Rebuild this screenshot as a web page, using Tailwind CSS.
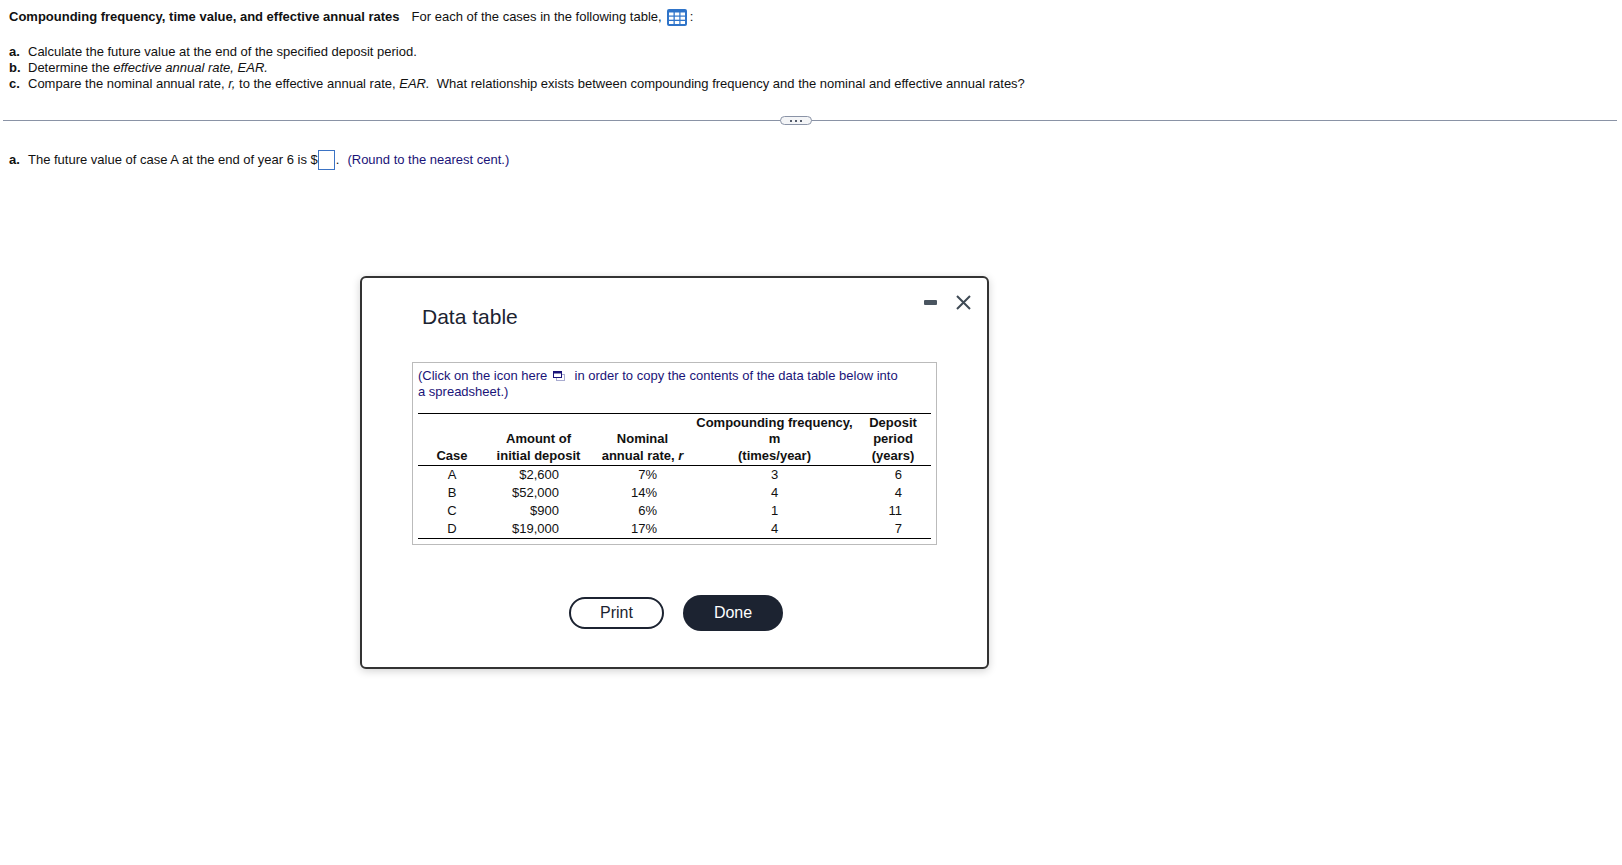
<!DOCTYPE html>
<html lang="en">
<head>
  <meta charset="UTF-8">
  <meta name="viewport" content="width=device-width, initial-scale=1.0">
  <title>Data table</title>
  <script src="https://cdn.jsdelivr.net/npm/@tailwindcss/browser@4"></script>
</head>
<body class="relative bg-white text-[#111] min-h-[865px] font-['Liberation_Sans',Arial,sans-serif] text-[13px] leading-[16px]">
  <!-- question -->
  <div class="pl-[9px] pt-[9px]">
    <div class="flex items-center h-[16px]">
      <b>Compounding frequency, time value, and effective annual rates</b>
      <span class="ml-[12px]">For each of the cases in the following table,</span>
      <svg class="ml-[5px] w-[20px] h-[17px]" viewBox="0 0 20 17">
        <rect x="0" y="0" width="20" height="17" rx="2" fill="#2f74c9"/>
        <g fill="#fff">
          <rect x="2" y="3.5" width="4.5" height="3"/><rect x="7.8" y="3.5" width="4.5" height="3"/><rect x="13.5" y="3.5" width="4.5" height="3"/>
          <rect x="2" y="7.7" width="4.5" height="3"/><rect x="7.8" y="7.7" width="4.5" height="3"/><rect x="13.5" y="7.7" width="4.5" height="3"/>
          <rect x="2" y="12" width="4.5" height="3"/><rect x="7.8" y="12" width="4.5" height="3"/><rect x="13.5" y="12" width="4.5" height="3"/>
        </g>
      </svg>
      <span class="ml-[3px]">:</span>
    </div>
    <div class="mt-[19px]"><b class="inline-block w-[19px]">a.</b>Calculate the future value at the end of the specified deposit period.</div>
    <div><b class="inline-block w-[19px]">b.</b>Determine the <i>effective annual rate, EAR.</i></div>
    <div><b class="inline-block w-[19px]">c.</b>Compare the nominal annual rate, <i>r,</i> to the effective annual rate, <i>EAR.</i>&nbsp; What relationship exists between compounding frequency and the nominal and effective annual rates?</div>
  </div>

  <!-- divider -->
  <div class="relative mx-[3px] mt-[28px] h-px bg-[#8a93a6] w-[1614px]">
    <div class="absolute left-[777px] top-[-4px] w-[32px] h-[9px] rounded-full border border-[#8a93a6] bg-[#f4f5f7] flex items-center justify-center gap-[3px]">
      <span class="w-[2px] h-[2px] bg-[#555c6b]"></span>
      <span class="w-[2px] h-[2px] bg-[#555c6b]"></span>
      <span class="w-[2px] h-[2px] bg-[#555c6b]"></span>
    </div>
  </div>

  <!-- answer -->
  <div class="flex items-center pl-[9px] mt-[29px] h-[20px]">
    <b class="w-[19px]">a.</b>
    <span>The future value of case A at the end of year 6 is $</span>
    <span class="w-[17px] h-[20px] border border-[#3b73c4]"></span>
    <span class="ml-[1px]">.</span>
    <span class="ml-[8px] text-[#1a1478]">(Round to the nearest cent.)</span>
  </div>

  <!-- dialog -->
  <div class="absolute left-[360px] top-[276px] w-[629px] h-[393px] bg-white border-2 border-[#333] rounded-[6px] shadow-[0_2px_8px_rgba(0,0,0,0.18)] pl-[50px] pt-[27px]">
    <div class="absolute right-[16px] top-[17px] flex items-center gap-[19px]">
      <span class="w-[13px] h-[5px] rounded-[1px] bg-[#4a5560]"></span>
      <svg class="w-[15px] h-[15px]" viewBox="0 0 15 15" fill="none" stroke="#3f4a55" stroke-width="2"><path d="M1 1l13 13M14 1L1 14"/></svg>
    </div>

    <div class="ml-[10px] text-[21px] leading-[24px] text-[#1c2331]">Data table</div>

    <div class="mt-[33px] w-[525px] border border-[#bbb] px-[5px] pt-[5px] pb-[5px]">
      <div class="text-[#1a1478] leading-[16px]">
        (Click on the icon here
        <svg class="inline-block ml-[2px] mr-[6px] align-[-1px] w-[12px] h-[10px]" viewBox="0 0 12 10" fill="none">
          <rect x="3.5" y="3.5" width="8" height="6" stroke="#a9acd0"/>
          <rect x="0.5" y="0.5" width="8" height="6" fill="#fff" stroke="#1a1478"/>
          <rect x="0.5" y="0.5" width="8" height="2" fill="#1a1478"/>
        </svg>
        in order to copy the contents of the data table below into<br>a spreadsheet.)
      </div>
      <table class="mt-[13px] w-[513px] table-fixed border-collapse border-y border-black">
        <colgroup>
          <col class="w-[68px]"><col class="w-[105px]"><col class="w-[103px]"><col class="w-[161px]"><col class="w-[76px]">
        </colgroup>
        <thead class="border-b border-black">
          <tr class="h-[52px] leading-[16.4px] align-bottom text-center">
            <th class="font-bold pb-[1px]">Case</th>
            <th class="font-bold pb-[1px]">Amount of<br>initial deposit</th>
            <th class="font-bold pb-[1px]">Nominal<br>annual rate, <i>r</i></th>
            <th class="font-bold pb-[1px]">Compounding frequency,<br>m<br>(times/year)</th>
            <th class="font-bold pb-[1px]">Deposit<br>period<br>(years)</th>
          </tr>
        </thead>
        <tbody>
          <tr class="h-[18px]"><td class="text-center">A</td><td class="text-right pr-[32px]">$2,600</td><td class="text-right pr-[37px]">7%</td><td class="text-center">3</td><td class="text-right pr-[29px]">6</td></tr>
          <tr class="h-[18px]"><td class="text-center">B</td><td class="text-right pr-[32px]">$52,000</td><td class="text-right pr-[37px]">14%</td><td class="text-center">4</td><td class="text-right pr-[29px]">4</td></tr>
          <tr class="h-[18px]"><td class="text-center">C</td><td class="text-right pr-[32px]">$900</td><td class="text-right pr-[37px]">6%</td><td class="text-center">1</td><td class="text-right pr-[29px]">11</td></tr>
          <tr class="h-[19px]"><td class="text-center">D</td><td class="text-right pr-[32px]">$19,000</td><td class="text-right pr-[37px]">17%</td><td class="text-center">4</td><td class="text-right pr-[29px]">7</td></tr>
        </tbody>
      </table>
    </div>

    <div class="mt-[50px] ml-[157px] flex items-center gap-[19px] text-[16px]">
      <button class="w-[95px] h-[32px] rounded-full border-2 border-[#1c2331] text-[#1c2331]">Print</button>
      <button class="w-[100px] h-[36px] rounded-full bg-[#1c2331] text-white">Done</button>
    </div>
  </div>
</body>
</html>
